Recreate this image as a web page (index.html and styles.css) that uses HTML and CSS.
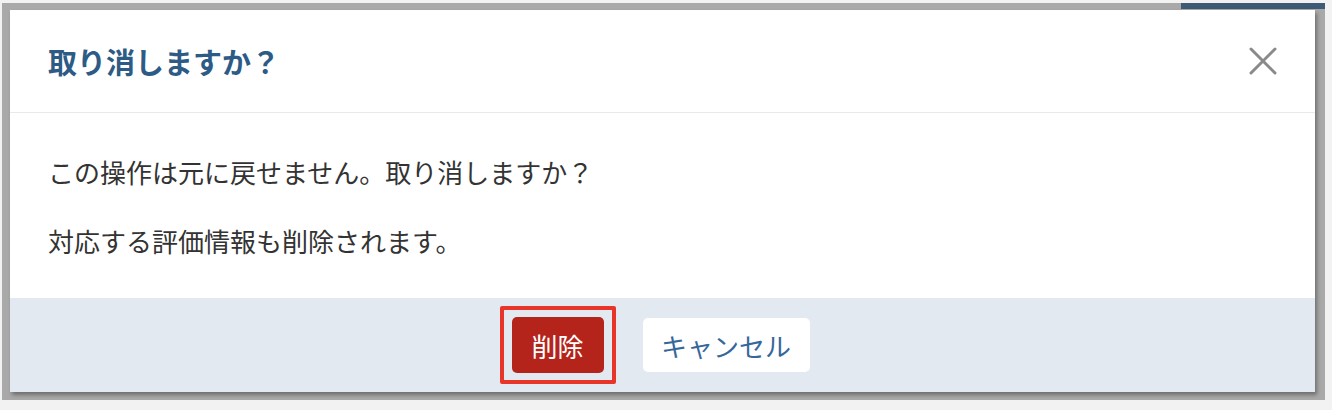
FILE: index.html
```html
<!DOCTYPE html>
<html lang="ja">
<head>
<meta charset="utf-8">
<title>取り消しますか？</title>
<link rel="stylesheet" href="styles.css">
</head>
<body>
<div class="frame">
  <div class="backdrop">
    <div class="modal">
      <div class="modal-header">
        <h2 class="modal-title">取り消しますか？</h2>
        <button class="close-btn" aria-label="閉じる">
          <svg width="28" height="28" viewBox="0 0 28 28"><path d="M2 2L26 26M26 2L2 26" stroke="#8a8a8a" stroke-width="3" stroke-linecap="round" fill="none"/></svg>
        </button>
      </div>
      <div class="modal-body">
        <p class="msg">この操作は元に戻せません。取り消しますか？</p>
        <p class="msg">対応する評価情報も削除されます。</p>
      </div>
      <div class="modal-footer">
        <span class="highlight"><button class="btn btn-danger">削除</button></span>
        <button class="btn btn-cancel">キャンセル</button>
      </div>
    </div>
  </div>
</div>
</body>
</html>
```
FILE: styles.css
```css
html, body {
  margin: 0;
  padding: 0;
}
body {
  font-family: "Noto Sans CJK JP", "Noto Sans", sans-serif;
  background: #f2f2f2;
}
.frame {
  height: 410px;
  box-sizing: border-box;
  padding: 3px 7px 10px 2px;
  background: #f2f2f2;
}
.backdrop {
  height: 100%;
  box-sizing: border-box;
  padding: 7px 10px 8px 8px;
  background: linear-gradient(#3e5b76, #3e5b76) no-repeat right top / 144px 6px, #a9a9a9;
}
.modal {
  height: 100%;
  background: #fff;
  display: flex;
  flex-direction: column;
  box-shadow: 2px 3px 4px rgba(0, 0, 0, 0.35);
}
.modal-header {
  height: 102px;
  border-bottom: 1px solid #e9e9e9;
  display: flex;
  align-items: center;
  justify-content: space-between;
  padding: 0 38px;
  flex-shrink: 0;
}
.modal-title {
  margin: 0;
  font-size: 29px;
  font-weight: 700;
  color: #2d5b86;
  line-height: 1;
}
.close-btn {
  border: 0;
  background: none;
  padding: 0;
  width: 28px;
  height: 28px;
  display: flex;
}
.modal-body {
  padding: 39px 38px 0;
  height: 185px;
  box-sizing: border-box;
  flex-shrink: 0;
}
.msg {
  margin: 0 0 30px;
  font-size: 26px;
  line-height: 39px;
  color: #333;
}
.modal-footer {
  flex: 1;
  background: #e3e9f0;
  display: flex;
  align-items: center;
  justify-content: center;
  gap: 39px;
  padding-right: 4px;
}
.highlight {
  display: flex;
  padding: 7px 8px;
  margin: -11px -12px;
  border: 4px solid #e8352a;
  border-radius: 2px;
}
.btn {
  font-family: inherit;
  font-size: 26px;
  border: 0;
  border-radius: 5px;
  padding: 0;
  display: flex;
  align-items: center;
  justify-content: center;
}
.btn-danger {
  width: 92px;
  height: 56px;
  background: #b4241b;
  color: #fff;
}
.btn-cancel {
  width: 167px;
  height: 54px;
  background: #fff;
  color: #36679a;
}
```
